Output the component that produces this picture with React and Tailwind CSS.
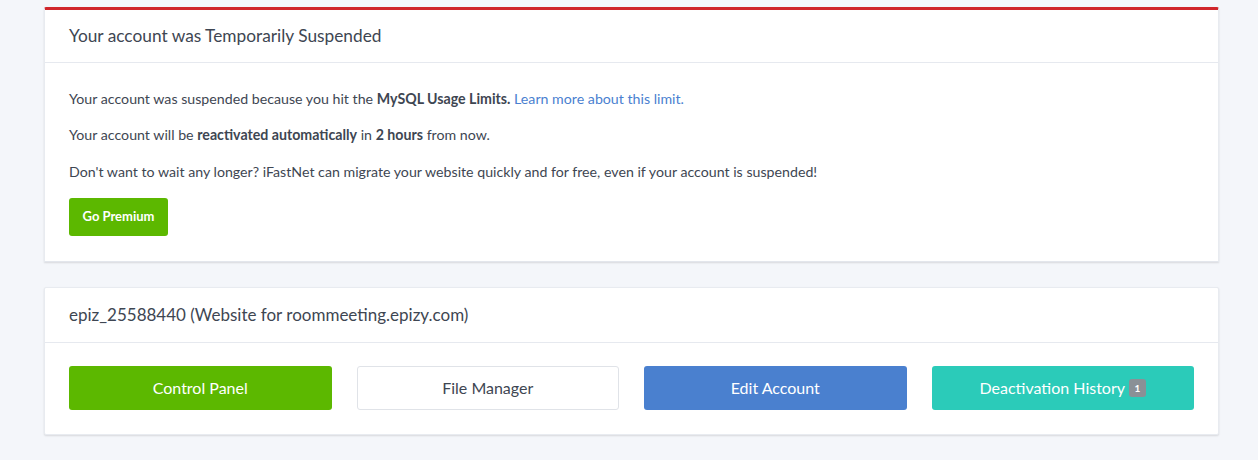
export default function App() {
  const font = { fontFamily: 'Lato, "Open Sans", sans-serif' };
  return (
    <div className="min-h-[460px] w-[1258px] bg-[#f4f6fa] pt-[7px] text-[#3e4652]" style={font}>
      <div className="ml-[44px] w-[1175px] flex flex-col gap-[25px]">
        <div className="bg-white border-t-[3px] border-[#d0262b] rounded-t-[2px] shadow-[0_1px_2px_rgba(0,0,0,0.12)] border-x border-b border-x-[#e8ebf0] border-b-[#e3e6ec]">
          <div className="h-[53px] flex items-center px-[24px] border-b border-[#e6e9ef] text-[17.3px]">
            Your account was Temporarily Suspended
          </div>
          <div className="px-[24px] pt-[26px] pb-[25px] text-[14.2px]">
            <p className="leading-[20px]">
              Your account was suspended because you hit the <b className="font-bold">MySQL Usage Limits.</b>{' '}
              <a className="text-[#4a7fd0]">Learn more about this limit.</a>
            </p>
            <p className="leading-[20px] mt-[16px]">
              Your account will be <b className="font-bold">reactivated automatically</b> in <b className="font-bold">2 hours</b> from now.
            </p>
            <p className="leading-[20px] mt-[17px]">
              Don't want to wait any longer? iFastNet can migrate your website quickly and for free, even if your account is suspended!
            </p>
            <button className="mt-[16px] h-[38px] w-[99px] rounded-[3px] bg-[#5cb800] text-white text-[13px] font-bold">
              Go Premium
            </button>
          </div>
        </div>
        <div className="bg-white shadow-[0_1px_2px_rgba(0,0,0,0.12)] border border-[#e8ebf0] rounded-[2px]">
          <div className="h-[55px] flex items-center px-[24px] border-b border-[#e6e9ef] text-[17px]">
            epiz_25588440 (Website for roommeeting.epizy.com)
          </div>
          <div className="px-[24px] pt-[23px] pb-[24px] grid grid-cols-4 gap-[25px]">
            <button className="h-[44px] rounded-[3px] bg-[#5cb800] text-white text-[16px]">Control Panel</button>
            <button className="h-[44px] rounded-[3px] bg-white border border-[#e0e3e8] text-[#3e4652] text-[16px]">File Manager</button>
            <button className="h-[44px] rounded-[3px] bg-[#4a80cf] text-white text-[16px]">Edit Account</button>
            <button className="h-[44px] rounded-[3px] bg-[#2bcbb9] text-white text-[16px] flex items-center justify-center gap-[4px]">
              Deactivation History
              <span className="inline-flex items-center justify-center w-[17px] h-[18px] rounded-[3px] bg-[#8a9096] text-white text-[10px] font-bold">1</span>
            </button>
          </div>
        </div>
      </div>
    </div>
  );
}
